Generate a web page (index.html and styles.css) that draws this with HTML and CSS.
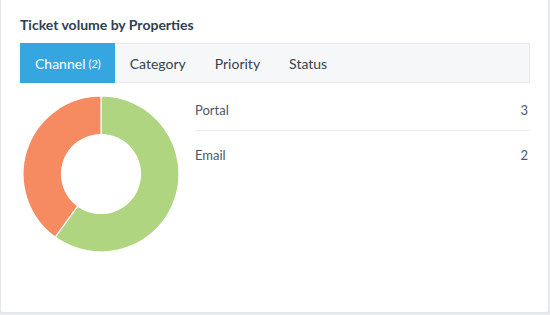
FILE: index.html
```html
<!DOCTYPE html>
<html>
<head>
<meta charset="utf-8">
<link rel="stylesheet" href="styles.css">
</head>
<body>
<div class="card">
  <h2 class="title">Ticket volume by Properties</h2>
  <div class="tabs">
    <div class="tab active">Channel <span class="count">(2)</span></div>
    <div class="tab">Category</div>
    <div class="tab">Priority</div>
    <div class="tab">Status</div>
  </div>
  <div class="body">
    <svg class="donut" width="158" height="158" viewBox="-79 -79 158 158">
      <path class="green" d="M0,-78 A78,78 0 1 1 -45.85,63.10 L-23.21,31.95 A39.5,39.5 0 1 0 0,-39.5 Z"/>
      <path class="orange" d="M-45.85,63.10 A78,78 0 0 1 0,-78 L0,-39.5 A39.5,39.5 0 0 0 -23.21,31.95 Z"/>
    </svg>
    <div class="list">
      <div class="row"><span>Portal</span><span>3</span></div>
      <div class="row"><span>Email</span><span>2</span></div>
    </div>
  </div>
</div>
</body>
</html>
```

FILE: styles.css
```css
html, body {
  margin: 0;
  padding: 0;
  background: #e8eaed;
}
body {
  width: 550px;
  height: 315px;
  overflow: hidden;
  font-family: Lato, "Open Sans", sans-serif;
}
.card {
  box-sizing: border-box;
  width: 549px;
  height: 313px;
  background: #fff;
  border: 1px solid #e2e5e9;
  border-top: none;
  border-radius: 0 0 3px 3px;
  padding: 16px 18px 0 19px;
}
.title {
  margin: 0;
  font-size: 14px;
  line-height: 18px;
  font-weight: 700;
  color: #2f4050;
  height: 27px;
}
.tabs {
  display: flex;
  height: 38px;
  background: #f6f7f9;
  border: 1px solid #e6e8eb;
}
.tab {
  display: flex;
  align-items: center;
  padding: 0 14px 0 15px;
  font-size: 14px;
  color: #37424d;
}
.tab.active {
  background: #35a6df;
  color: #fff;
  margin: -1px 0 -1px -1px;
  padding: 0 14px 0 15px;
}
.count {
  font-size: 11px;
  margin-left: 3px;
}
.body {
  display: flex;
  padding-top: 12px;
}
.donut {
  margin-left: 2px;
  flex: none;
}
.green { fill: #afd580; stroke: #fff; stroke-width: 1.2; }
.orange { fill: #f68b62; stroke: #fff; stroke-width: 1.2; }
.list {
  flex: 1;
  margin-left: 15px;
  margin-top: -9px;
}
.row {
  display: flex;
  justify-content: space-between;
  padding: 15px 2px 11px 0;
  line-height: 18px;
  font-size: 13px;
  color: #4a5866;
}
.row + .row {
  border-top: 1px solid #e8ebee;
}
```
